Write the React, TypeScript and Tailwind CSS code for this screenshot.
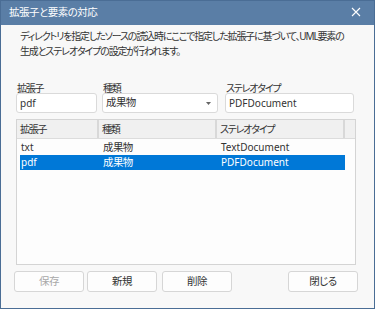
import React from "react";

const font = {
  fontFamily: '"Noto Sans", "Noto Sans CJK JP", sans-serif',
};

function Btn({ label, disabled, className = "" }: { label: string; disabled?: boolean; className?: string }) {
  return (
    <div
      className={`h-[21px] w-[70px] rounded-[3px] border border-[#d6d6d6] bg-[#fdfdfd] flex items-center justify-center text-[10.5px] tracking-[-0.6px] ${
        disabled ? "text-[#a8a8a8]" : "text-[#333]"
      } ${className}`}
    >
      {label}
    </div>
  );
}

export default function App() {
  return (
    <div
      style={font}
      className="w-[375px] h-[309px] border border-[#4a6d95] bg-[#f8f8f8] flex flex-col [font-feature-settings:'palt'] overflow-hidden whitespace-nowrap"
    >
      {/* title bar */}
      <div className="h-[24px] bg-[#5a7ea6] flex items-center justify-between pl-[8px] pr-[13px] text-white text-[10.5px] tracking-[-0.5px]">
        <span>拡張子と要素の対応</span>
        <svg width="10" height="10" viewBox="0 0 10 10" className="mt-[-3px]">
          <path d="M1 1 L9 9 M9 1 L1 9" stroke="white" strokeWidth="1.1" />
        </svg>
      </div>

      {/* description */}
      <div className="pl-[19px] pt-[4px] text-[10px] leading-[15px] tracking-[-1.15px] text-[#333]">
        <div>ディレクトリを指定したソースの読込時にここで指定した拡張子に基づいて、UML要素の</div>
        <div>生成とステレオタイプの設定が行われます。</div>
      </div>

      {/* fields */}
      <div className="mt-[22px] pl-[15px] flex text-[10px] tracking-[-1.2px] text-[#333]">
        <div className="w-[81px] flex flex-col">
          <span className="leading-[14px] pl-[1px]">拡張子</span>
          <div className="mt-[-2px] h-[20px] rounded-[3px] border border-[#dadada] bg-white flex items-center pl-[3px] text-[10px] tracking-normal">
            pdf
          </div>
        </div>
        <div className="ml-[5px] w-[116px] flex flex-col">
          <span className="leading-[14px] pl-[1px]">種類</span>
          <div className="mt-[-2px] h-[20px] rounded-[3px] border border-[#dadada] bg-white flex items-center justify-between pl-[3px] pr-[6px] text-[10.5px] tracking-[-0.6px]">
            <span>成果物</span>
            <svg width="5" height="3" viewBox="0 0 5 3">
              <path d="M0 0 L5 0 L2.5 3 Z" fill="#666" />
            </svg>
          </div>
        </div>
        <div className="ml-[7px] w-[129px] flex flex-col">
          <span className="leading-[14px] pl-[1px]">ステレオタイプ</span>
          <div className="mt-[-2px] h-[20px] rounded-[3px] border border-[#dadada] bg-white flex items-center pl-[3px] text-[10px] tracking-normal">
            PDFDocument
          </div>
        </div>
      </div>

      {/* table */}
      <div className="mt-[6px] ml-[15px] w-[340px] h-[146px] border border-[#d4d4d4] bg-[#fdfdfd] flex flex-col text-[10px] text-[#333]">
        <div className="h-[19px] bg-[#f0f0f0] border-b border-[#dcdcdc] flex tracking-[-1.2px]">
          <div className="w-[82px] border-r-2 border-[#d8d8d8] pl-[3px] flex items-center">拡張子</div>
          <div className="w-[118px] border-r-2 border-[#d8d8d8] pl-[3px] flex items-center">種類</div>
          <div className="w-[128px] border-r-2 border-[#d8d8d8] pl-[3px] flex items-center">ステレオタイプ</div>
          <div className="flex-1" />
        </div>
        <div className="pl-[3px] pt-[1px] flex flex-col">
          <div className="h-[15px] w-[325px] flex items-center">
            <span className="w-[82px] pl-[1px]">txt</span>
            <span className="w-[118px] pl-[1px] text-[10.5px] tracking-[-0.6px]">成果物</span>
            <span className="pl-[1px]">TextDocument</span>
          </div>
          <div className="h-[15px] w-[325px] flex items-center bg-[#0078d7] text-white">
            <span className="w-[82px] pl-[1px]">pdf</span>
            <span className="w-[118px] pl-[1px] text-[10.5px] tracking-[-0.6px]">成果物</span>
            <span className="pl-[1px]">PDFDocument</span>
          </div>
        </div>
      </div>

      {/* buttons */}
      <div className="mt-[6px] pl-[13px] flex">
        <Btn label="保存" disabled />
        <Btn label="新規" className="ml-[3px]" />
        <Btn label="削除" className="ml-[5px]" />
        <Btn label="閉じる" className="ml-auto mr-[16px]" />
      </div>
    </div>
  );
}
